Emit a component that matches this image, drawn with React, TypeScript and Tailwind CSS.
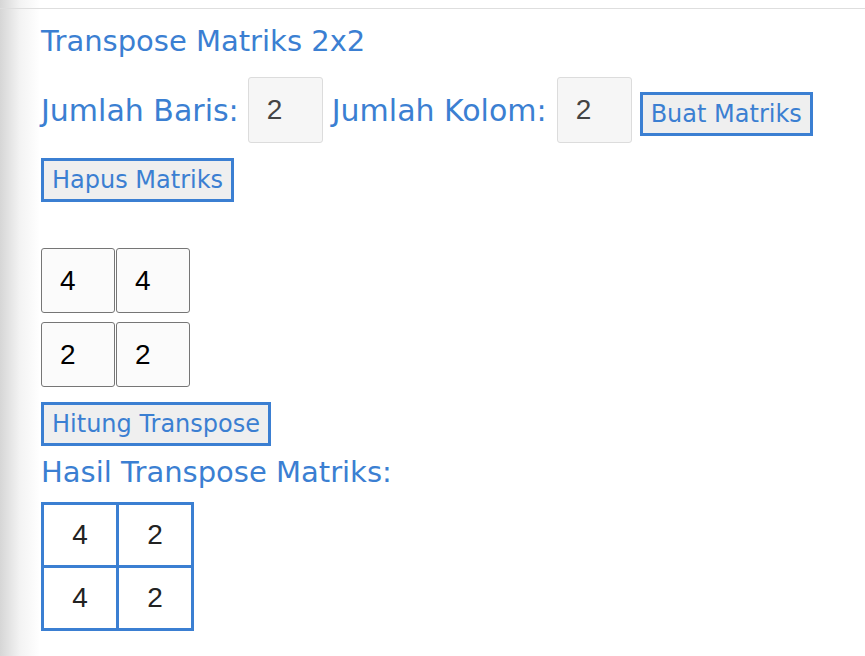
const blue = "text-[#3b7fd2]";

function Btn({ label }: { label: string }) {
  return (
    <button className="h-[44px] px-[8px] border-[3px] border-[#3b7fd2] bg-[#efefef] text-[#3b7fd2] text-[24px] leading-none">
      {label}
    </button>
  );
}

function Cell({ value }: { value: string }) {
  return (
    <div className="w-[74px] h-[65px] border border-[#767676] rounded-[3px] bg-[#fbfbfb] flex items-center pl-[18px] text-[28px] text-black font-['Liberation_Sans',sans-serif]">
      {value}
    </div>
  );
}

function SizeInput({ value }: { value: string }) {
  return (
    <div className="w-[75px] h-[66px] border border-[#dcdcdc] rounded-[3px] bg-[#f6f6f6] flex items-center pl-[18px] text-[28px] text-[#444] font-['Liberation_Sans',sans-serif]">
      {value}
    </div>
  );
}

export default function App() {
  const input = [
    ["4", "4"],
    ["2", "2"],
  ];
  const result = [
    ["4", "2"],
    ["4", "2"],
  ];
  return (
    <div className="w-[865px] h-[656px] overflow-hidden bg-[linear-gradient(to_right,#d6d6d6,#f3f3f3_20px,#ffffff_40px)] font-['DejaVu_Sans',sans-serif]">
      <div className="h-[9px] border-b border-[#dedede]" />
      <div className="pl-[41px]">
        <h1 className={`${blue} text-[29px] leading-none mt-[18px]`}>Transpose Matriks 2x2</h1>
        <div className={`flex items-center mt-[21px] ${blue} text-[30px]`}>
          <span>Jumlah Baris:</span>
          <div className="ml-[9px]">
            <SizeInput value="2" />
          </div>
          <span className="ml-[9px]">Jumlah Kolom:</span>
          <div className="ml-[10px]">
            <SizeInput value="2" />
          </div>
          <div className="ml-[8px] mt-[5px]">
            <Btn label="Buat Matriks" />
          </div>
        </div>
        <div className="mt-[15px]">
          <Btn label="Hapus Matriks" />
        </div>
        <div className="mt-[46px] flex flex-col gap-[9px]">
          {input.map((row, i) => (
            <div key={i} className="flex gap-px">
              {row.map((v, j) => (
                <Cell key={j} value={v} />
              ))}
            </div>
          ))}
        </div>
        <div className="mt-[15px]">
          <Btn label="Hitung Transpose" />
        </div>
        <h2 className={`${blue} text-[29px] leading-none mt-[12px]`}>Hasil Transpose Matriks:</h2>
        <table className="mt-[15px] border-collapse border-[3px] border-[#3b7fd2] text-[28px] text-[#222] font-['Liberation_Sans',sans-serif]">
          <tbody>
            {result.map((row, i) => (
              <tr key={i}>
                {row.map((v, j) => (
                  <td key={j} className="border-[3px] border-[#3b7fd2] w-[75px] h-[63px] text-center p-0">
                    {v}
                  </td>
                ))}
              </tr>
            ))}
          </tbody>
        </table>
      </div>
    </div>
  );
}
